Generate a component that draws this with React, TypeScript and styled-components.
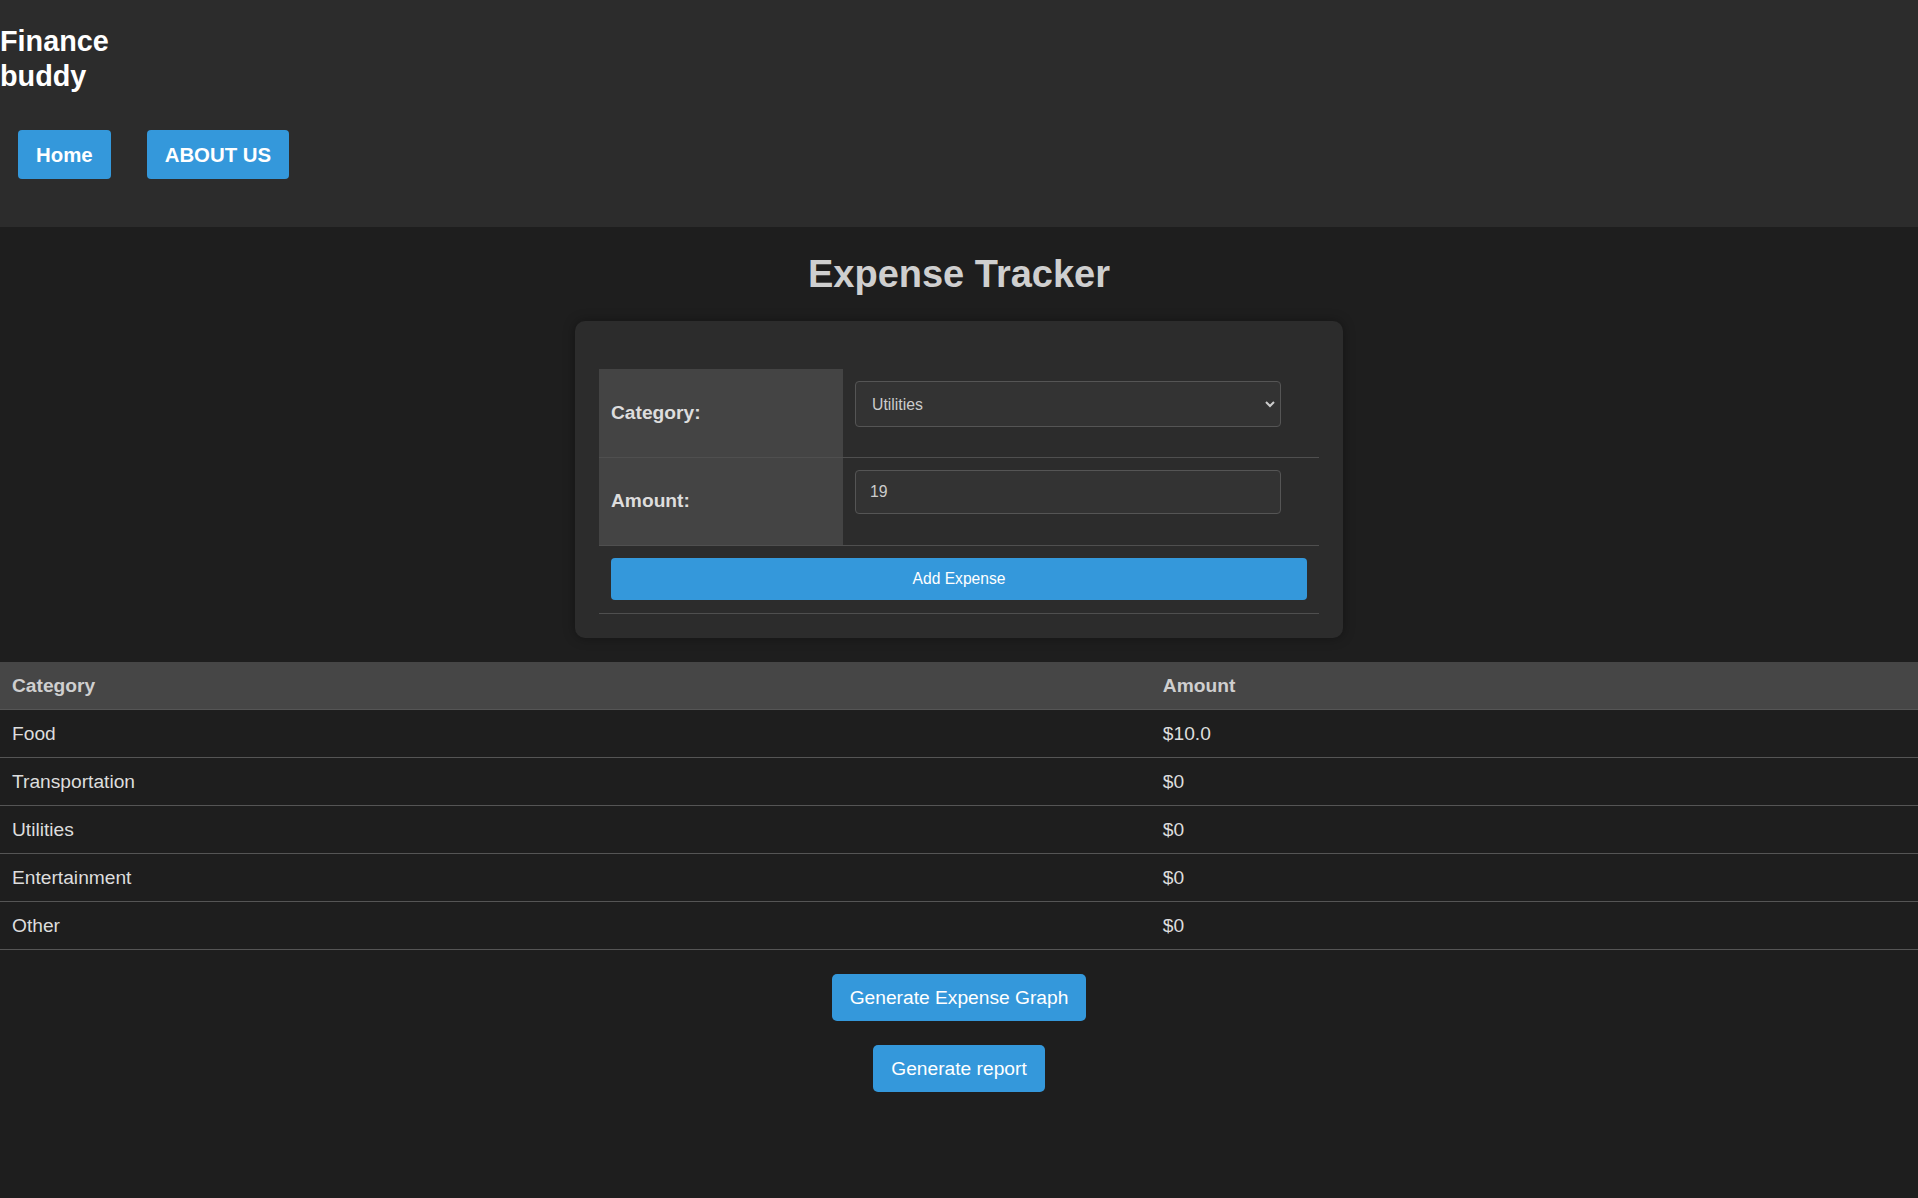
import React, { useState } from "react";
import styled, { createGlobalStyle } from "styled-components";

const GlobalStyle = createGlobalStyle`
  html {
    box-sizing: border-box;
    background: #1e1e1e;
  }
  *, *:before, *:after {
    box-sizing: inherit;
  }
  body {
    margin: 0;
    padding: 0;
    background: #1e1e1e;
    font-family: "Liberation Sans", Arial, sans-serif;
    color: #ddd;
    min-height: 100vh;
  }
`;

const Header = styled.header`
  background: #2c2c2c;
  height: 227px;
  padding-top: 23.5px;
  display: flex;
  flex-direction: column;
`;

const Logo = styled.h1`
  margin: 0;
  width: 120px;
  font-size: 28.8px;
  line-height: 35px;
  font-weight: bold;
  color: #fff;
`;

const Nav = styled.nav`
  display: flex;
  gap: 36px;
  padding-left: 18px;
  margin-top: 36.5px;
`;

const NavButton = styled.button`
  background: #3498db;
  color: #fff;
  border: none;
  border-radius: 4px;
  font-family: inherit;
  font-size: 20.4px;
  font-weight: bold;
  line-height: 24px;
  padding: 12.5px 18px;
  cursor: pointer;
`;

const Title = styled.h1`
  margin: 25px 0 25px;
  text-align: center;
  font-size: 38px;
  line-height: 44px;
  font-weight: bold;
  color: #cfcfcf;
`;

const Card = styled.div`
  width: 768px;
  margin: 0 auto;
  background: #2c2c2c;
  border-radius: 10px;
  padding: 48px 24px 24px;
  box-shadow: 0 0 12px rgba(0, 0, 0, 0.35);
`;

const FormTable = styled.table`
  width: 100%;
  border-collapse: collapse;
`;

const FormRow = styled.tr`
  border-bottom: 1px solid #4f4f4f;
`;

const LabelCell = styled.th`
  width: 244px;
  height: 88px;
  background: #444;
  padding: 0 12px;
  text-align: left;
  vertical-align: middle;
  font-size: 19.2px;
  font-weight: bold;
  color: #ddd;
`;

const FieldCell = styled.td`
  padding: 12px;
  vertical-align: top;
`;

const SelectWrap = styled.div`
  position: relative;
  width: 426px;
`;

const Select = styled.select<{ $h: number }>`
  appearance: none;
  -webkit-appearance: none;
  width: 426px;
  height: ${(p) => p.$h}px;
  background: #333;
  border: 1px solid #555;
  border-radius: 4px;
  color: #ccc;
  font-family: inherit;
  font-size: 15.8px;
  padding: 0 16px;
  outline: none;
`;

const Chevron = styled.svg`
  position: absolute;
  right: 4px;
  top: 50%;
  transform: translateY(-50%);
  pointer-events: none;
`;

const Input = styled.input<{ $h: number }>`
  width: 426px;
  height: ${(p) => p.$h}px;
  background: #333;
  border: 1px solid #555;
  border-radius: 4px;
  color: #ccc;
  font-family: inherit;
  font-size: 15.8px;
  padding: 0 14px;
  outline: none;
`;

const ButtonCell = styled.td`
  padding: 12px 12px 13px;
`;

const AddButton = styled.button`
  width: 100%;
  height: 42px;
  background: #3498db;
  color: #fff;
  border: none;
  border-radius: 4px;
  font-family: inherit;
  font-size: 15.6px;
  cursor: pointer;
`;

const ExpenseTable = styled.table`
  width: 100%;
  margin-top: 24px;
  border-collapse: collapse;
`;

const HeadCell = styled.th<{ $w?: string }>`
  width: ${(p) => p.$w || "auto"};
  background: #464646;
  padding: 12px;
  text-align: left;
  font-size: 19.2px;
  line-height: 23px;
  font-weight: bold;
  color: #cfcfcf;
  border-bottom: 1px solid #555;
`;

const Cell = styled.td`
  padding: 12px;
  font-size: 19.2px;
  line-height: 23px;
  color: #ddd;
  border-bottom: 1px solid #555;
`;

const Actions = styled.div`
  display: flex;
  flex-direction: column;
  align-items: center;
  gap: 24px;
  margin-top: 24px;
  padding-bottom: 40px;
`;

const ActionButton = styled.button`
  background: #3498db;
  color: #fff;
  border: none;
  border-radius: 5px;
  font-family: inherit;
  font-size: 19.2px;
  line-height: 23px;
  padding: 12px 18px;
  cursor: pointer;
`;

const categories = ["Food", "Transportation", "Utilities", "Entertainment", "Other"];

function App() {
  const [category, setCategory] = useState("Utilities");
  const [amount, setAmount] = useState("19");
  const totals: Record<string, string> = {
    Food: "$10.0",
    Transportation: "$0",
    Utilities: "$0",
    Entertainment: "$0",
    Other: "$0",
  };

  return (
    <>
      <GlobalStyle />
      <Header>
        <Logo>Finance buddy</Logo>
        <Nav>
          <NavButton>Home</NavButton>
          <NavButton>ABOUT US</NavButton>
        </Nav>
      </Header>
      <main>
        <Title>Expense Tracker</Title>
        <Card>
          <FormTable>
            <tbody>
              <FormRow>
                <LabelCell>Category:</LabelCell>
                <FieldCell>
                  <SelectWrap>
                    <Select $h={46} value={category} onChange={(e) => setCategory(e.target.value)}>
                      {categories.map((c) => (
                        <option key={c}>{c}</option>
                      ))}
                    </Select>
                    <Chevron width="14" height="14" viewBox="0 0 14 14">
                      <path d="M3 5 L7 9 L11 5" fill="none" stroke="#ccc" strokeWidth="2" />
                    </Chevron>
                  </SelectWrap>
                </FieldCell>
              </FormRow>
              <FormRow>
                <LabelCell>Amount:</LabelCell>
                <FieldCell>
                  <Input $h={44} value={amount} onChange={(e) => setAmount(e.target.value)} />
                </FieldCell>
              </FormRow>
              <FormRow>
                <ButtonCell colSpan={2}>
                  <AddButton>Add Expense</AddButton>
                </ButtonCell>
              </FormRow>
            </tbody>
          </FormTable>
        </Card>
        <ExpenseTable>
          <thead>
            <tr>
              <HeadCell $w="60%">Category</HeadCell>
              <HeadCell>Amount</HeadCell>
            </tr>
          </thead>
          <tbody>
            {categories.map((c) => (
              <tr key={c}>
                <Cell>{c}</Cell>
                <Cell>{totals[c]}</Cell>
              </tr>
            ))}
          </tbody>
        </ExpenseTable>
        <Actions>
          <ActionButton>Generate Expense Graph</ActionButton>
          <ActionButton>Generate report</ActionButton>
        </Actions>
      </main>
    </>
  );
}

export default App;
